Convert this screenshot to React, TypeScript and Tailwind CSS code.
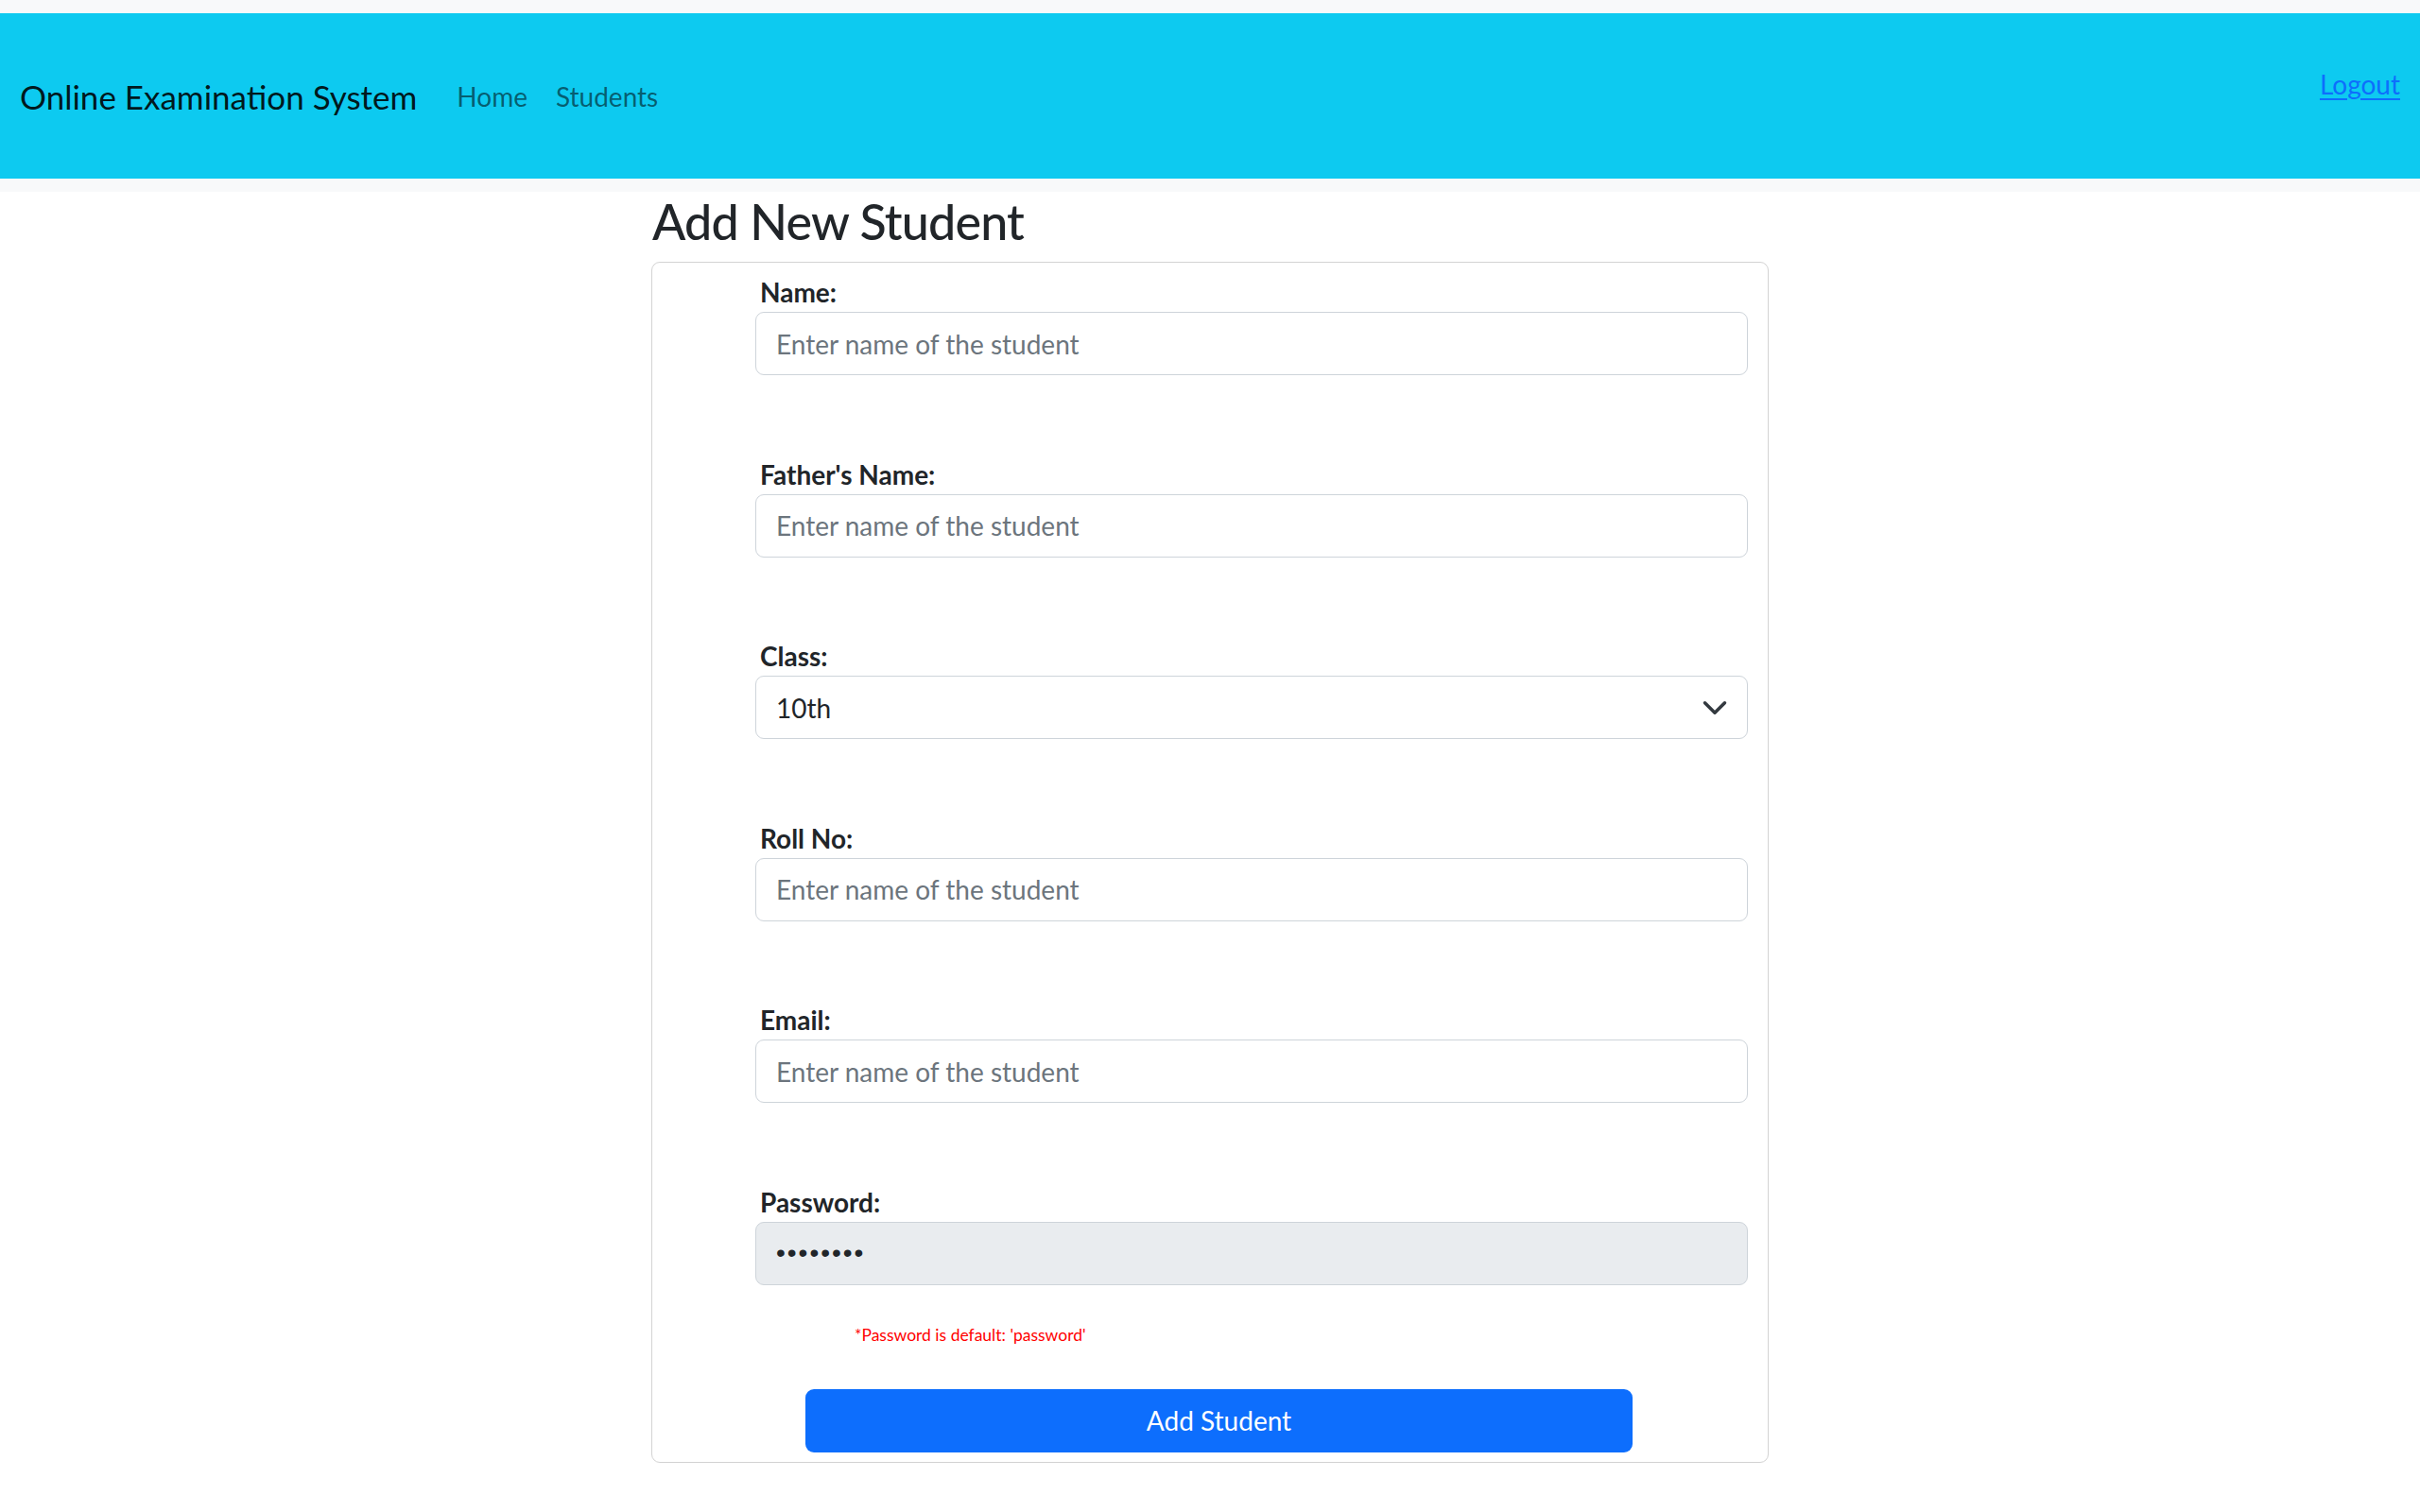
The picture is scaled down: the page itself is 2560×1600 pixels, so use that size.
import React from "react";

const fieldInput =
  "block w-full h-[67px] rounded-[9px] border border-[#ced4da] px-[21px] text-[28px] text-[#212529] placeholder:text-[#6c757d] outline-none";

function Field({ label, children, last }: { label: string; children: React.ReactNode; last?: boolean }) {
  return (
    <div className={last ? "" : "mb-[83.6px]"}>
      <label className="block h-[42px] pl-[5px] text-[28px] leading-[42px] font-bold text-[#212529]">{label}</label>
      {children}
    </div>
  );
}

export default function App() {
  return (
    <div className="min-h-screen bg-white font-['Lato',sans-serif] text-[#212529]">
      <div className="bg-[#f8f9fa] py-[14px]">
        <nav className="relative flex h-[175px] items-center bg-[#0dcaf0] px-[21px]">
          <span className="text-[35px] leading-[52px] text-[rgba(0,0,0,0.9)]">Online Examination System</span>
          <div className="ml-[28px] flex items-center gap-[16px]">
            <a className="px-[14px] text-[28px] leading-[42px] text-[rgba(0,0,0,0.55)]">Home</a>
            <a className="px-[0px] text-[28px] leading-[42px] text-[rgba(0,0,0,0.55)]">Students</a>
          </div>
          <a href="#" className="ml-auto mb-[26px] text-[28px] leading-[42px] text-[#0d6efd] underline underline-offset-[4px]">
            Logout
          </a>
        </nav>
      </div>
      <main className="mx-auto w-[1182px]">
        <h2 className="mt-[1px] mb-[13px] text-[52px] font-medium leading-[60px] tracking-[-0.8px] pl-[1px]">Add New Student</h2>
        <div className="rounded-[9px] border border-[#d3d3d3] pt-[10px] pb-[10px] pl-[109px] pr-[21px]">
          <Field label="Name:">
            <input className={fieldInput + " bg-white"} placeholder="Enter name of the student" />
          </Field>
          <Field label="Father's Name:">
            <input className={fieldInput + " bg-white"} placeholder="Enter name of the student" />
          </Field>
          <Field label="Class:">
            <div className="relative">
              <select className={fieldInput + " bg-white appearance-none"} defaultValue="10th">
                <option>10th</option>
                <option>9th</option>
                <option>8th</option>
              </select>
              <svg
                className="pointer-events-none absolute right-[21px] top-1/2 h-[21px] w-[28px] -translate-y-1/2"
                viewBox="0 0 16 12"
                fill="none"
              >
                <path d="m2 3 6 6 6-6" stroke="#343a40" strokeWidth="2" strokeLinecap="round" strokeLinejoin="round" />
              </svg>
            </div>
          </Field>
          <Field label="Roll No:">
            <input className={fieldInput + " bg-white"} placeholder="Enter name of the student" />
          </Field>
          <Field label="Email:">
            <input className={fieldInput + " bg-white"} placeholder="Enter name of the student" />
          </Field>
          <Field label="Password:" last>
            <input
              className={fieldInput + " bg-[#e9ecef] font-['Liberation_Sans',sans-serif] tracking-[2px]"}
              type="password"
              defaultValue="password"
              disabled
            />
          </Field>
          <p className="mt-[40px] pl-[105px] text-[17.5px] leading-[26px] text-[#ff0000]">*Password is default: 'password'</p>
          <button className="mt-[44px] ml-[53px] block h-[67px] w-[875px] rounded-[9px] bg-[#0d6efd] text-[28px] text-white">
            Add Student
          </button>
        </div>
      </main>
    </div>
  );
}
